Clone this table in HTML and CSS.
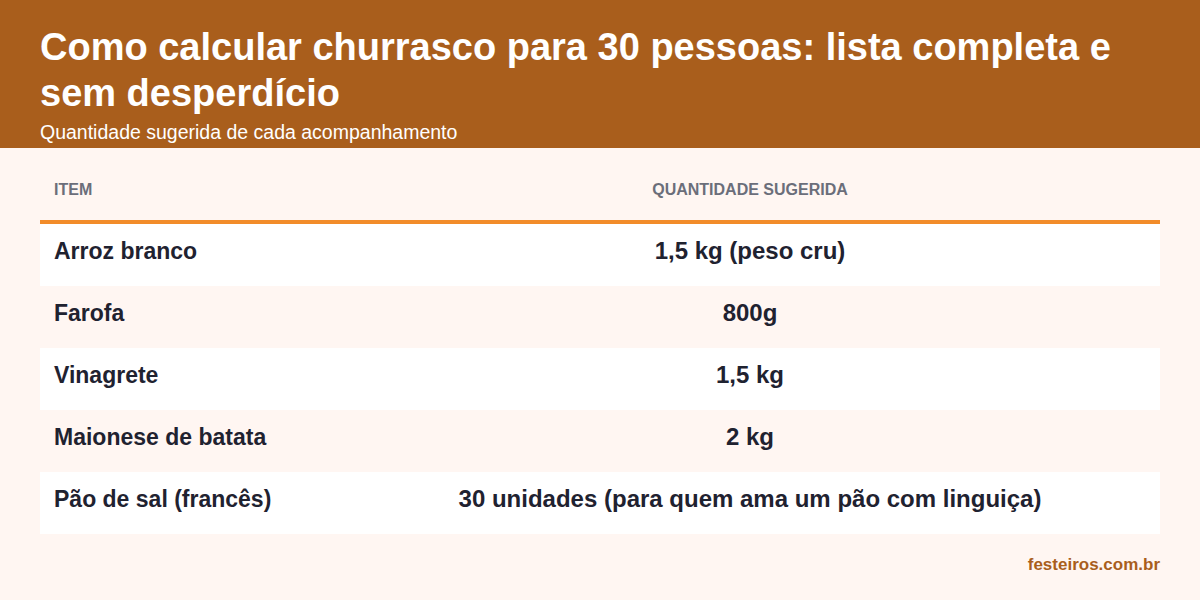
FILE: index.html
```html
<!DOCTYPE html>
<html lang="pt-BR">
<head>
<meta charset="utf-8">
<title>Churrasco para 30 pessoas</title>
<link rel="stylesheet" href="styles.css">
</head>
<body>
<header class="hero">
  <h1 class="hero-title">Como calcular churrasco para 30 pessoas: lista completa e sem desperdício</h1>
  <p class="hero-sub">Quantidade sugerida de cada acompanhamento</p>
</header>
<main class="content">
  <table class="qty-table">
    <thead>
      <tr>
        <th class="col-item">Item</th>
        <th class="col-qty">Quantidade sugerida</th>
      </tr>
    </thead>
    <tbody>
      <tr><td class="col-item">Arroz branco</td><td class="col-qty">1,5 kg (peso cru)</td></tr>
      <tr><td class="col-item">Farofa</td><td class="col-qty">800g</td></tr>
      <tr><td class="col-item">Vinagrete</td><td class="col-qty">1,5 kg</td></tr>
      <tr><td class="col-item">Maionese de batata</td><td class="col-qty">2 kg</td></tr>
      <tr><td class="col-item">Pão de sal (francês)</td><td class="col-qty">30 unidades (para quem ama um pão com linguiça)</td></tr>
    </tbody>
  </table>
  <footer class="brand">festeiros.com.br</footer>
</main>
</body>
</html>
```
FILE: styles.css
```css
* { box-sizing: border-box; }
html, body { margin: 0; padding: 0; }
body {
  width: 1200px;
  height: 600px;
  overflow: hidden;
  background: #fff6f2;
  font-family: "Liberation Sans", Arial, sans-serif;
  color: #1f2230;
}
.hero {
  background: #a95e1c;
  color: #ffffff;
  padding: 24px 40px 0;
  height: 148px;
}
.hero-title {
  margin: 0;
  font-size: 38px;
  line-height: 46px;
  font-weight: 700;
}
.hero-sub {
  margin: 4px 0 0;
  font-size: 19.5px;
  line-height: 24px;
}
.content {
  padding: 18px 40px 0;
}
.qty-table {
  width: 100%;
  border-collapse: collapse;
}
.qty-table th {
  font-size: 16px;
  line-height: 19px;
  font-weight: 700;
  text-transform: uppercase;
  color: #6b6e7a;
  padding: 14px 14px 21px;
  border-bottom: 4px solid #f28c2a;
}
.qty-table td {
  font-size: 23px;
  line-height: 28px;
  font-weight: 700;
  color: #1f2230;
  padding: 13px 14px 21px;
}
.qty-table td.col-qty { font-size: 24px; }
.qty-table tbody tr:nth-child(odd) { background: #ffffff; }
.qty-table tbody tr:nth-child(even) { background: #fff6f2; }
.col-item { text-align: left; width: 300px; }
.col-qty { text-align: center; }
.brand {
  text-align: right;
  font-size: 17px;
  line-height: 20px;
  font-weight: 700;
  color: #a95e1c;
  margin-top: 21px;
}
```
